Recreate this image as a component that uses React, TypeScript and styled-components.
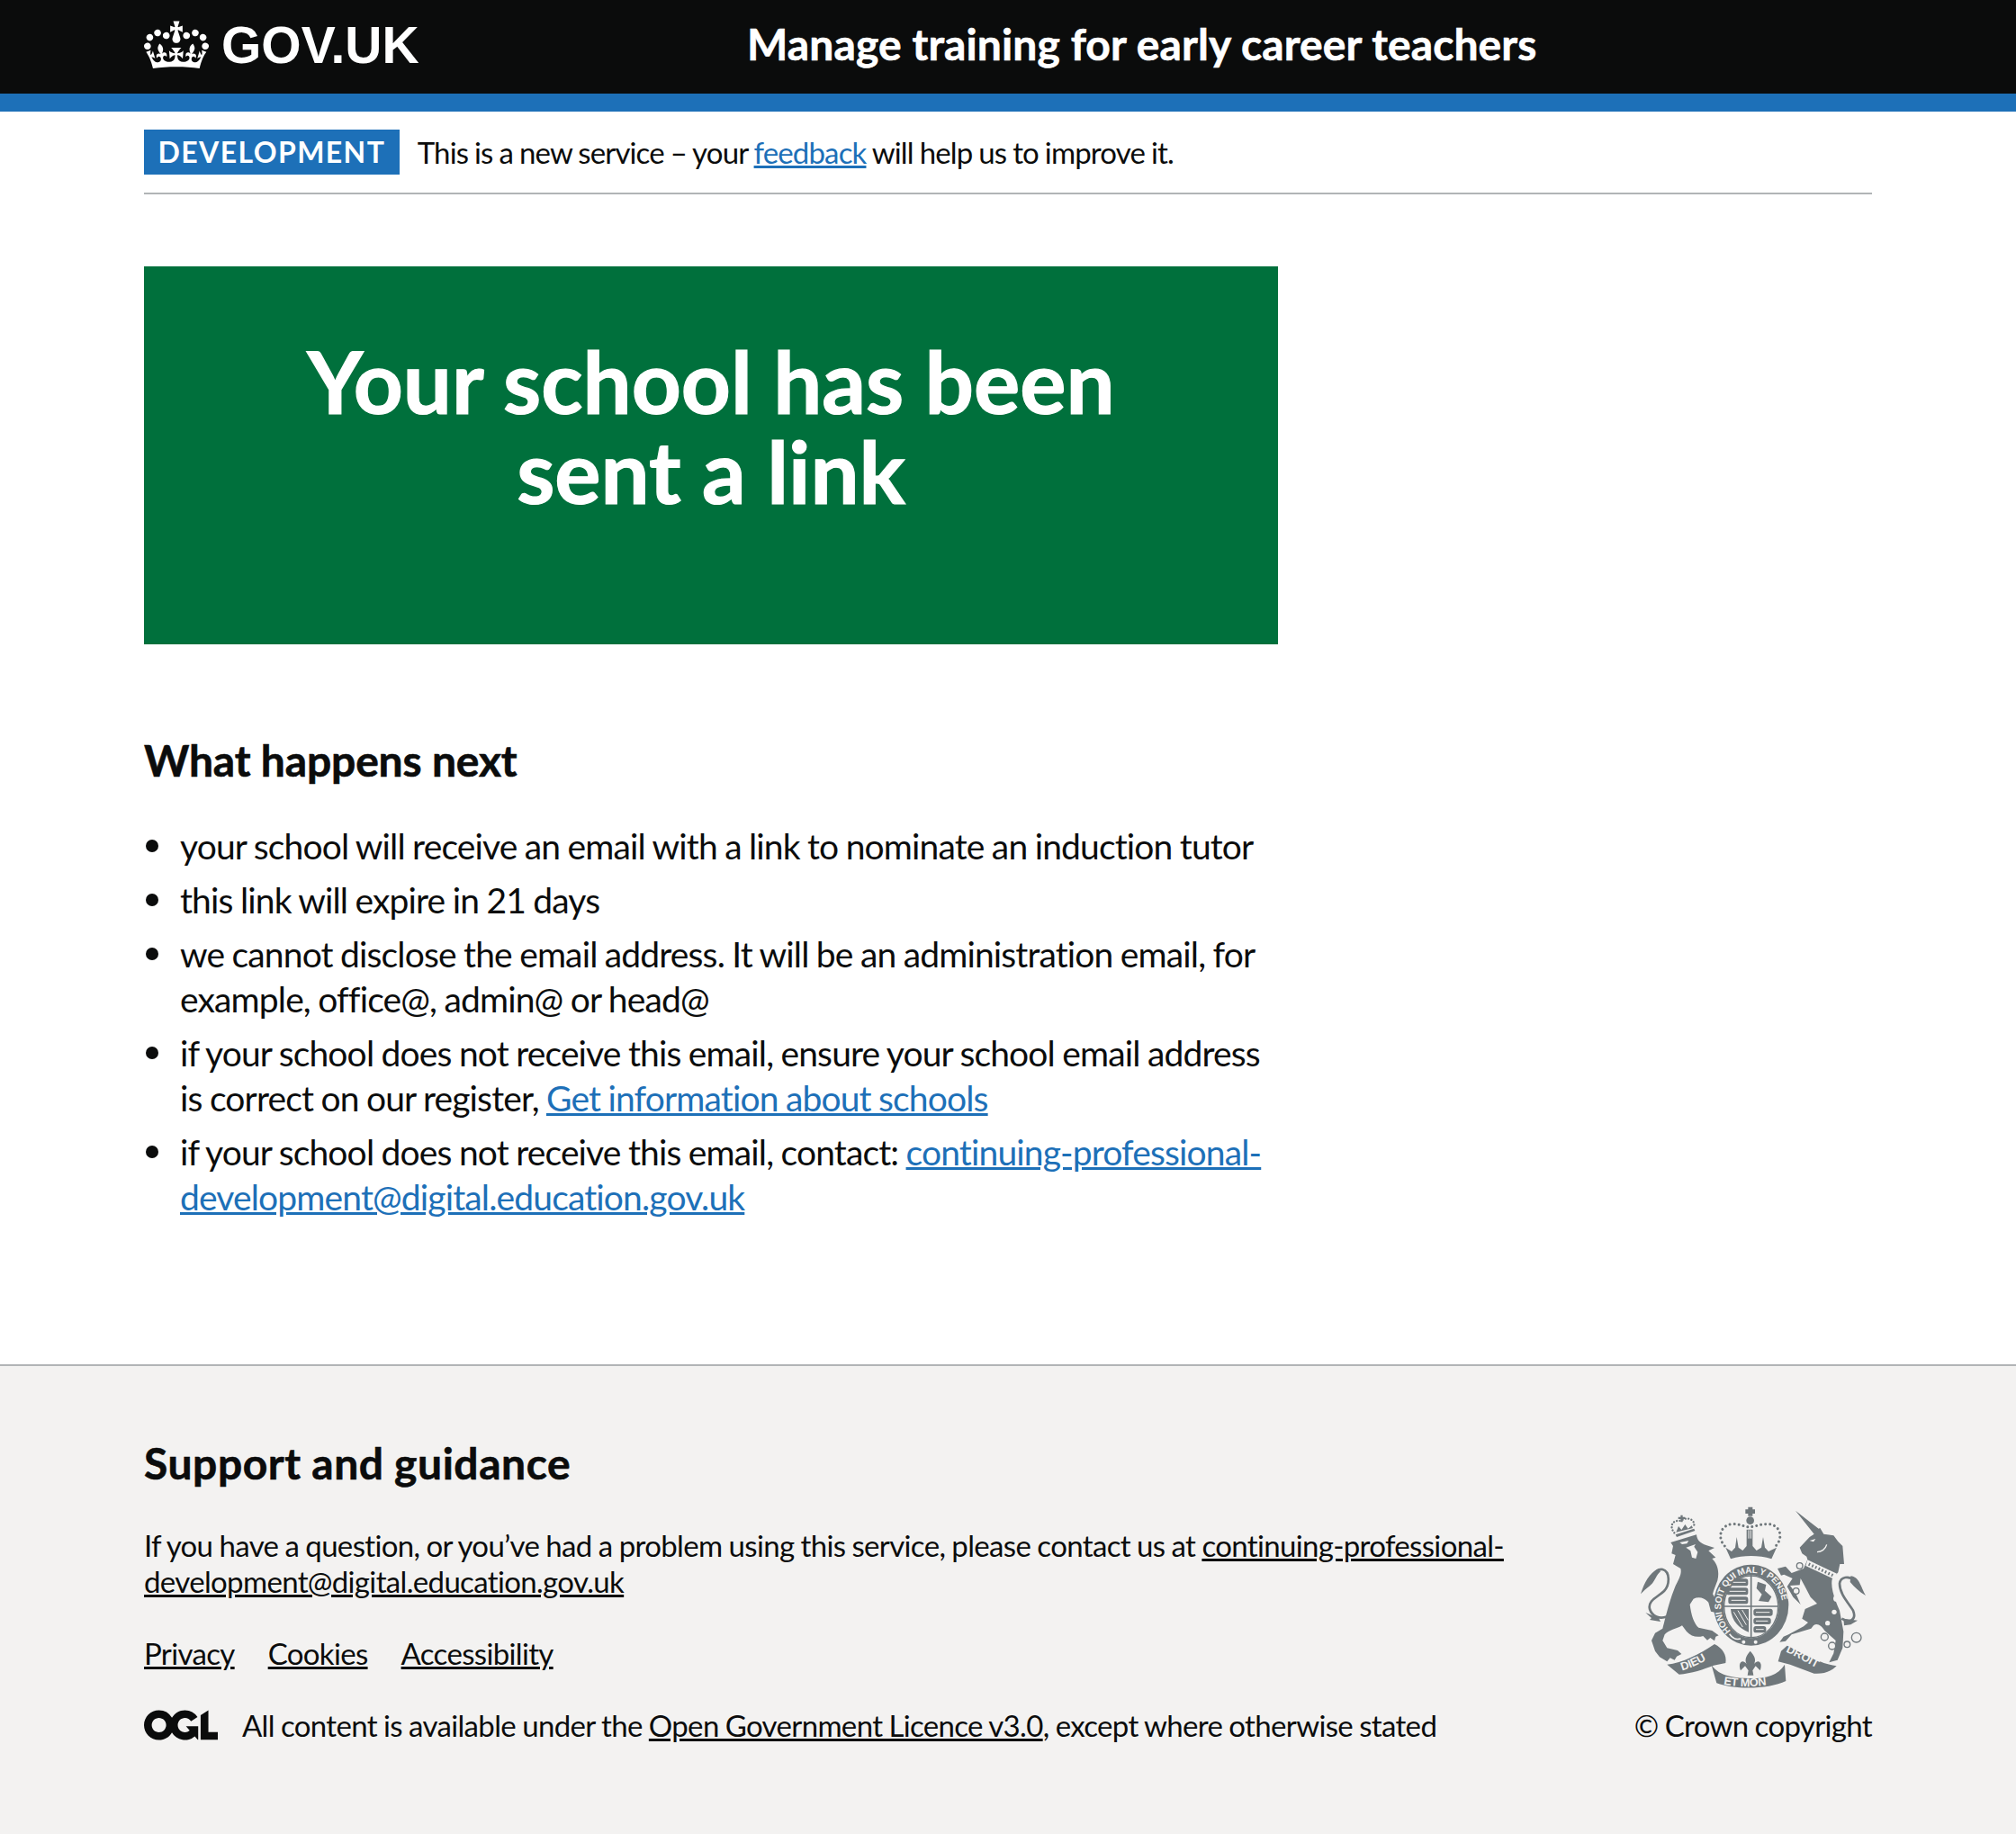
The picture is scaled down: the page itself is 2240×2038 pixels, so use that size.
import styled, {createGlobalStyle} from "styled-components";

const GlobalStyle = createGlobalStyle`
  html, body {
    margin: 0;
    padding: 0;
    background: #fff;
    color: #0b0c0c;
    font-family: Lato, "Liberation Sans", sans-serif;
  }
`;

const Page = styled.div`
  width: 100%;
  display: flex;
  flex-direction: column;
  min-height: 2038px;
`;

const Width = styled.div`
  width: 1920px;
  margin: 0 auto;
`;

const Header = styled.header`
  background: #0b0c0c;
  border-bottom: 20px solid #1d70b8;
  height: 104px;
`;

const HeaderInner = styled(Width)`
  display: flex;
  align-items: center;
  height: 100px;
`;

const Logo = styled.a`
  width: 670px;
  display: flex;
  align-items: center;
  column-gap: 14px;
  color: #fff;
`;

const LogoText = styled.span`
  font-family: "Liberation Sans", sans-serif;
  font-weight: 700;
  font-size: 57px;
  line-height: 1;
`;

const ServiceName = styled.span`
  color: #fff;
  font-weight: 700;
  font-size: 48px;
  line-height: 58px;
  letter-spacing: 0.1px;
  margin-bottom: 3px;
  -webkit-text-stroke: 0.6px;
`;

const PhaseBanner = styled(Width)`
  display: flex;
  align-items: center;
  column-gap: 20px;
  padding: 20px 0;
  border-bottom: 2px solid #b1b4b6;
`;

const Tag = styled.strong`
  background: #1d70b8;
  color: #fff;
  font-size: 32px;
  font-weight: 700;
  letter-spacing: 1.4px;
  line-height: 50px;
  padding: 0 15.5px;
`;

const BannerText = styled.span`
  font-size: 33px;
  line-height: 40px;
  letter-spacing: -0.026em;
  word-spacing: -0.02em;
  margin-bottom: 1px;
`;

const Link = styled.a<{$plain?: boolean}>`
  color: ${(p) => (p.$plain ? "#0b0c0c" : "#1d70b8")};
  text-decoration: underline;
`;

const Main = styled(Width)`
  padding: 80px 0 151px;
`;

const Column = styled.div`
  width: 1260px;
`;

const Panel = styled.div`
  background: #00703c;
  color: #fff;
  height: 420px;
  box-sizing: border-box;
  padding: 77px 50px;
  text-align: center;
  margin-bottom: 99px;
`;

const PanelTitle = styled.h1`
  margin: 0;
  font-size: 96px;
  line-height: 100px;
  font-weight: 700;
  -webkit-text-stroke: 1.2px;
`;

const Heading = styled.h2`
  margin: 0 0 40px;
  font-size: 48px;
  line-height: 60px;
  font-weight: 700;
  letter-spacing: -0.17px;
  -webkit-text-stroke: 0.6px;
`;

const Bullets = styled.ul`
  margin: 0;
  padding: 0 0 0 40px;
  list-style: none;
  font-size: 39px;
  line-height: 50px;
  letter-spacing: -0.022em;
  word-spacing: -0.02em;
`;

const Bullet = styled.li`
  position: relative;
  margin-bottom: 10px;

  &::before {
    content: "";
    position: absolute;
    left: -38px;
    top: 18px;
    width: 14px;
    height: 14px;
    border-radius: 50%;
    background: #0b0c0c;
  }
`;

const Footer = styled.footer`
  flex: 1;
  background: #f3f2f1;
  border-top: 2px solid #b1b4b6;
  padding: 78px 0 0;
`;

const FooterHeading = styled.h2`
  margin: 0 0 41px;
  font-size: 48px;
  line-height: 60px;
  font-weight: 700;
  letter-spacing: 0.55px;
  -webkit-text-stroke: 0.6px;
`;

const Meta = styled(Width)`
  display: flex;
  align-items: flex-end;
  justify-content: space-between;
  font-size: 33px;
  line-height: 40px;
  letter-spacing: -0.02em;
  word-spacing: -0.02em;
`;

const MetaMain = styled.div`
  width: 1540px;
`;

const MetaText = styled.p`
  margin: 0 0 40px;
`;

const MetaLinks = styled.div`
  display: flex;
  column-gap: 37px;
  margin-bottom: 40px;
`;

const Licence = styled.div`
  display: flex;
  align-items: center;
  column-gap: 27px;
`;

const Copyright = styled.div`
  display: flex;
  flex-direction: column;
  align-items: flex-end;
  row-gap: 20px;
`;

const ArmsFrame = styled.div`
  margin-right: 7px;
  line-height: 0;
`;

const Crown = () => (
    <svg width="72" height="60" viewBox="0 0 132 97">
        <path
            fill="currentColor"
            fillRule="evenodd"
            d="M25 30.2c3.5 1.5 7.7-.2 9.1-3.7 1.5-3.6-.2-7.8-3.9-9.2-3.6-1.4-7.6.3-9.1 3.9-1.4 3.5.3 7.5 3.9 9zM9 39.5c3.6 1.5 7.8-.2 9.2-3.7 1.5-3.6-.2-7.8-3.9-9.1-3.6-1.5-7.6.2-9.1 3.8-1.4 3.5.3 7.5 3.8 9zM4.4 57.2c3.5 1.5 7.7-.2 9.1-3.8 1.5-3.6-.2-7.7-3.9-9.1-3.5-1.5-7.6.3-9.1 3.8-1.4 3.5.3 7.6 3.9 9.1zm38.3-21.4c3.5 1.5 7.7-.2 9.1-3.8 1.5-3.6-.2-7.7-3.9-9.1-3.6-1.5-7.6.3-9.1 3.8-1.3 3.6.4 7.7 3.9 9.1zm64.4-5.6c-3.6 1.5-7.8-.2-9.1-3.7-1.5-3.6.2-7.8 3.8-9.2 3.6-1.4 7.7.3 9.2 3.9 1.3 3.5-.4 7.5-3.9 9zm15.9 9.3c-3.6 1.5-7.7-.2-9.1-3.7-1.5-3.6.2-7.8 3.7-9.1 3.6-1.5 7.7.2 9.2 3.8 1.5 3.5-.3 7.5-3.8 9zm4.7 17.7c-3.6 1.5-7.8-.2-9.2-3.8-1.5-3.6.2-7.7 3.9-9.1 3.6-1.5 7.7.3 9.2 3.8 1.3 3.5-.4 7.6-3.9 9.1zM89.3 35.8c-3.6 1.5-7.8-.2-9.2-3.8-1.4-3.6.2-7.7 3.9-9.1 3.6-1.5 7.7.3 9.2 3.8 1.4 3.6-.3 7.7-3.9 9.1zM69.7 17.7l8.9 4.7V9.3l-8.9 2.8c-.2-.3-.5-.6-.9-.9L72.4 0H59.6l3.5 11.2c-.3.3-.6.5-.9.9l-8.8-2.8v13.1l8.8-4.7c.3.3.6.7.9.9l-5 15.4v.1c-.2.8-.4 1.6-.4 2.4 0 4.1 3.1 7.5 7 8.1h.2c.3 0 .7.1 1 .1.4 0 .7 0 1-.1h.2c4-.6 7.1-4.1 7.1-8.1 0-.8-.1-1.7-.4-2.4V34l-5.1-15.4c.4-.2.7-.6 1-.9zM66 92.8c16.9 0 32.8 1.1 47.1 3.2 4-16.9 8.9-26.7 14-33.5l-9.6-3.4c1 4.9 1.1 7.2 0 10.2-1.5-1.4-3-4.3-4.2-8.7L108.6 76c2.8-2 5-3.2 7.5-3.3-4.4 9.4-10 11.9-13.6 11.2-4.3-.8-6.3-4.6-5.6-7.9 1-4.7 5.7-5.9 8-.5 4.3-8.7-3-11.4-7.6-8.8 7.1-7.2 7.9-13.5 2.1-21.1-8 6.1-8.1 12.3-4.5 20.8-4.7-5.4-12.1-2.5-9.5 6.2 3.4-5.2 7.9-2 7.2 3.1-.6 4.3-6.4 7.8-13.5 7.2-10.3-.9-10.9-8-11.2-13.8 2.5-.5 7.1 1.8 11 7.3L80.2 60c-4.1 4.4-8 5.3-12.3 5.4 1.4-4.4 8-11.6 8-11.6H55.5s6.4 7.2 7.9 11.6c-4.2-.1-8-1-12.3-5.4l1.4 16.4c3.9-5.5 8.5-7.7 10.9-7.3-.3 5.8-.9 12.8-11.1 13.8-7.2.6-12.9-2.9-13.5-7.2-.7-5 3.8-8.3 7.1-3.1 2.7-8.7-4.6-11.6-9.4-6.2 3.7-8.5 3.6-14.7-4.6-20.8-5.8 7.6-5 13.9 2.2 21.1-4.7-2.6-11.9.1-7.7 8.8 2.3-5.5 7.1-4.2 8.1.5.7 3.3-1.3 7.1-5.7 7.9-3.5.7-9-1.8-13.5-11.2 2.5.1 4.7 1.3 7.5 3.3l-4.7-15.4c-1.2 4.4-2.7 7.2-4.3 8.7-1.1-3-.9-5.3 0-10.2l-9.5 3.4c5 6.9 9.9 16.7 14 33.5 14.8-2.1 30.8-3.2 47.7-3.2z"
        />
    </svg>
);

const OglLogo = () => (
    <svg width="82" height="34" viewBox="0 0 483.2 195.7">
        <path
            fill="#0b0c0c"
            d="M421.5 142.8V.1l-50.7 32.3v161.1h112.4v-50.7zm-122.3-9.6A47.12 47.12 0 0 1 221 97.8c0-26 21.1-47.1 47.1-47.1 16.7 0 31.4 8.7 39.7 21.8l42.7-27.2A97.63 97.63 0 0 0 268.1 0c-36.5 0-68.3 20.1-85.1 49.7A98 98 0 0 0 97.8 0C43.9 0 0 43.9 0 97.8s43.9 97.8 97.8 97.8c36.5 0 68.3-20.1 85.1-49.7a97.76 97.76 0 0 0 149.6 25.4l19.4 22.2h3v-87.8h-80l24.3 27.5zM97.8 145c-26 0-47.1-21.1-47.1-47.1s21.1-47.1 47.1-47.1 47.2 21 47.2 47S123.8 145 97.8 145"
        />
    </svg>
);

const ARMS = "#6f777b";
const BG = "#f3f2f1";

const Lion = () => (
    <g transform="translate(60 45)" fill={ARMS}>
        <path d="M112 118 L198 92 C200 110 208 120 232 128 L258 136 L238 146 L262 168 L250 172 C268 190 275 215 268 245 C262 262 256 275 252 290 L270 320 L282 345 L262 352 L246 348 L238 318 C225 302 205 298 188 306 L176 325 C180 360 190 390 205 402 L250 412 L272 428 L262 432 L258 446 L244 436 L234 444 L220 430 C200 436 180 432 165 415 L150 395 C135 405 105 410 92 425 L85 445 L100 470 L135 478 L148 490 L132 498 L125 510 L110 503 L100 515 L75 500 L60 480 L48 445 L60 420 L85 405 C92 380 105 320 125 270 C138 240 150 225 145 205 L120 190 L128 160 L115 155 L120 130 Z" />
        <path fill="none" stroke={ARMS} strokeWidth="8" d="M100 365 C75 375 50 365 42 340 C35 310 70 300 90 280 C110 258 110 215 85 208 C70 205 60 215 50 230" />
        <path d="M70 206 C40 222 25 250 12 290 C25 275 35 270 50 255 C60 245 65 225 78 215 Z" />
        <path d="M72 370 L28 352 L48 370 L42 376 L78 382 Z" />
        <path fill={BG} d="M163 135 L195 124 L190 132 L202 150 L196 172 L183 168 L178 146 Z" />
        <path fill={BG} d="M142 118 L172 112 L166 122 L150 124 Z" />
        {/* crown on the lion */}
        <path d="M128 92 L190 72 L193 79 L132 100 Z" />
        <path d="M130 84 L138 64 L148 76 L160 58 L170 72 L182 62 L186 70 Z" />
        <path fill="none" stroke={ARMS} strokeWidth="7" strokeDasharray="0.1 10" strokeLinecap="round" d="M124 86 C105 62 120 42 145 46 C170 28 198 45 188 68" />
        <path d="M145 27 H152 V33 H160 V40 H152 V50 H145 V40 H137 V33 H145 Z" />
    </g>
);

const Unicorn = () => (
    <g transform="translate(510 45)" fill={ARMS}>
        <path d="M78 12 L155 72 L160 70 L172 90 L205 95 L220 115 L235 130 L240 190 L226 190 L220 218 L200 240 C195 265 205 300 225 345 L238 415 L235 470 L218 510 L190 518 L205 488 L212 445 L175 412 C165 395 150 385 138 395 L130 405 L65 425 L45 447 L25 450 L38 432 L55 425 L105 398 L120 385 L100 372 L110 340 L150 322 L128 300 L108 262 L95 238 L92 260 L60 262 L80 290 L95 325 L70 300 L50 265 L68 238 L40 225 L30 228 L18 205 L45 198 L65 220 L105 205 L118 175 L115 165 L100 155 L92 135 L125 100 L140 90 Z" />
        <path fill="none" stroke={ARMS} strokeWidth="8" d="M232 372 C260 390 282 375 270 345 C255 320 225 290 225 255 C228 232 255 228 275 245" />
        <path d="M262 230 C290 232 295 265 312 295 C290 282 275 268 260 250 Z" />
        <path d="M238 372 L285 378 L262 392 L240 395 Z" />
        {/* collar */}
        <path fill={BG} d="M118 176 L216 222 L208 241 L112 196 Z" />
        <path fill="none" stroke={ARMS} strokeWidth="10" strokeDasharray="5 7" d="M122 190 L205 229" />
        <path fill="none" stroke={BG} strokeWidth="4" d="M182 125 C178 140 165 150 150 150" />
        <path fill={BG} d="M125 112 L145 106 L138 116 Z" />
        <g fill={BG}>
            <circle cx="215" cy="305" r="11" />
            <circle cx="207" cy="350" r="8" />
            <circle cx="185" cy="387" r="8" />
        </g>
        <g fill={BG} stroke={ARMS} strokeWidth="4">
            <circle cx="92" cy="196" r="10" />
            <circle cx="80" cy="280" r="10" />
            <circle cx="175" cy="433" r="12" />
            <circle cx="200" cy="463" r="12" />
            <circle cx="250" cy="458" r="10" />
            <circle cx="281" cy="435" r="16" />
        </g>
    </g>
);

const Shield = () => (
    <g transform="translate(240 90)" fill={ARMS}>
        {/* royal crown */}
        <path d="M115 90 L135 103 L147 90 L152 55 L158 90 L172 100 L185 85 L185 30 L205 30 L205 85 L218 100 L234 90 L240 55 L246 90 L258 103 L285 90 L268 128 C225 115 175 115 132 128 Z" />
        <path stroke={BG} strokeWidth="3" d="M192 32 V60 M199 32 V60" />
        <path fill="none" stroke={ARMS} strokeWidth="9" strokeDasharray="0.1 15" strokeLinecap="round" d="M112 85 C85 55 100 15 135 12 C160 10 175 20 195 22 C215 20 235 10 260 12 C295 15 310 55 282 85" />
        <circle cx="197" cy="0" r="13" />
        <path d="M190 -45 H205 V-37 H213 V-23 H205 V-15 H190 V-23 H181 V-37 H190 Z" />
        {/* garter */}
        <ellipse cx="200" cy="282" rx="125" ry="135" />
        <ellipse cx="200" cy="287" rx="92" ry="105" fill={BG} />
        <path stroke={ARMS} strokeWidth="5" d="M200 182 V392 M108 286 H292" />
        <ellipse cx="200" cy="287" rx="90" ry="103" fill="none" stroke={ARMS} strokeWidth="4" />
        {/* quarters */}
        <rect x="132" y="194" width="58" height="24" rx="8" />
        <rect x="118" y="224" width="72" height="24" rx="8" />
        <rect x="124" y="254" width="66" height="24" rx="8" />
        <path stroke={BG} strokeWidth="3" fill="none" d="M140 206 H182 M128 236 H182 M134 266 H182" />
        <path d="M222 204 L250 214 L246 234 L268 254 L258 272 L225 268 L236 246 L218 226 Z" />
        <path d="M132 295 H192 V372 C160 360 135 335 132 295 Z" />
        <path stroke={BG} strokeWidth="3" d="M142 305 L172 355 M156 300 L184 348 M170 298 L190 332" />
        <rect x="208" y="294" width="64" height="24" rx="8" />
        <rect x="208" y="324" width="58" height="22" rx="8" />
        <rect x="208" y="352" width="42" height="22" rx="8" />
        <path stroke={BG} strokeWidth="3" fill="none" d="M216 306 H262 M216 335 H256 M216 363 H242" />
        {/* buckle */}
        <circle cx="175" cy="405" r="6" fill={BG} />
        <circle cx="215" cy="405" r="6" fill={BG} />
        <path fill="none" stroke={BG} strokeWidth="5" d="M128 378 C140 395 150 398 165 394" />
    </g>
);

// traced by hand from the reference, 3 units to a pixel
const CoatOfArms = () => (
    <svg width="250" height="204" viewBox="72 40 750 612">
        <defs>
            <path id="garter" d="M372 458 A 102 112 0 1 1 512 458" />
            <path id="dieu" d="M210 590 C245 580 275 565 305 545" />
            <path id="etmon" d="M348 636 C400 646 470 646 525 632" />
            <path id="droit" d="M555 528 C595 545 635 570 675 590" />
        </defs>
        <Lion/>
        <Unicorn/>
        <Shield/>
        <g fill={ARMS}>
            <path d="M160 570 C210 565 270 535 318 502 C345 515 360 540 355 565 L315 573 C285 585 240 600 200 603 Z" />
            <path d="M540 525 L560 507 C590 520 660 565 725 575 C705 595 680 602 650 600 L570 570 L530 560 Z" />
            <path d="M308 572 C335 610 385 616 440 616 C490 616 530 606 552 570 L556 625 C500 652 390 656 325 632 Z" />
            <path fillRule="evenodd" d="M437 525 C450 540 458 552 450 568 C465 550 480 565 470 590 L455 575 L445 590 L448 606 H428 L431 590 L420 575 L405 590 C395 565 410 550 425 568 C417 552 425 540 437 525 Z" />
        </g>
        <g fill={BG} fontFamily="Liberation Sans, sans-serif" fontWeight="700">
            <text fontSize="30"><textPath href="#garter">HONI SOIT QUI MAL Y PENSE</textPath></text>
            <text fontSize="38"><textPath href="#dieu">DIEU</textPath></text>
            <text fontSize="38"><textPath href="#etmon">ET MON</textPath></text>
            <text fontSize="38"><textPath href="#droit">DROIT</textPath></text>
        </g>
    </svg>
);

const App = () => {
    return (
        <Page>
            <GlobalStyle/>
            <Header>
                <HeaderInner>
                    <Logo>
                        <Crown/>
                        <LogoText>GOV.UK</LogoText>
                    </Logo>
                    <ServiceName>Manage training for early career teachers</ServiceName>
                </HeaderInner>
            </Header>
            <PhaseBanner>
                <Tag>DEVELOPMENT</Tag>
                <BannerText>
                    This is a new service – your <Link href="#">feedback</Link> will help us to improve it.
                </BannerText>
            </PhaseBanner>
            <Main>
                <Column>
                    <Panel>
                        <PanelTitle>Your school has been<br/>sent a link</PanelTitle>
                    </Panel>
                    <Heading>What happens next</Heading>
                    <Bullets>
                        <Bullet>your school will receive an email with a link to nominate an induction tutor</Bullet>
                        <Bullet>this link will expire in 21 days</Bullet>
                        <Bullet>we cannot disclose the email address. It will be an administration email, for example, office@, admin@ or head@</Bullet>
                        <Bullet>
                            if your school does not receive this email, ensure your school email address is correct on our register, <Link href="#">Get information about schools</Link>
                        </Bullet>
                        <Bullet>
                            if your school does not receive this email, contact: <Link href="#">continuing-professional-development@digital.education.gov.uk</Link>
                        </Bullet>
                    </Bullets>
                </Column>
            </Main>
            <Footer>
                <Meta>
                    <MetaMain>
                        <FooterHeading>Support and guidance</FooterHeading>
                        <MetaText>
                            If you have a question, or you’ve had a problem using this service, please contact us at <Link $plain href="#">continuing-professional-development@digital.education.gov.uk</Link>
                        </MetaText>
                        <MetaLinks>
                            <Link $plain href="#">Privacy</Link>
                            <Link $plain href="#">Cookies</Link>
                            <Link $plain href="#">Accessibility</Link>
                        </MetaLinks>
                        <Licence>
                            <OglLogo/>
                            <span>
                                All content is available under the <Link $plain href="#">Open Government Licence v3.0</Link>, except where otherwise stated
                            </span>
                        </Licence>
                    </MetaMain>
                    <Copyright>
                        <ArmsFrame><CoatOfArms/></ArmsFrame>
                        <span>© Crown copyright</span>
                    </Copyright>
                </Meta>
            </Footer>
        </Page>
    );
};

export default App;
